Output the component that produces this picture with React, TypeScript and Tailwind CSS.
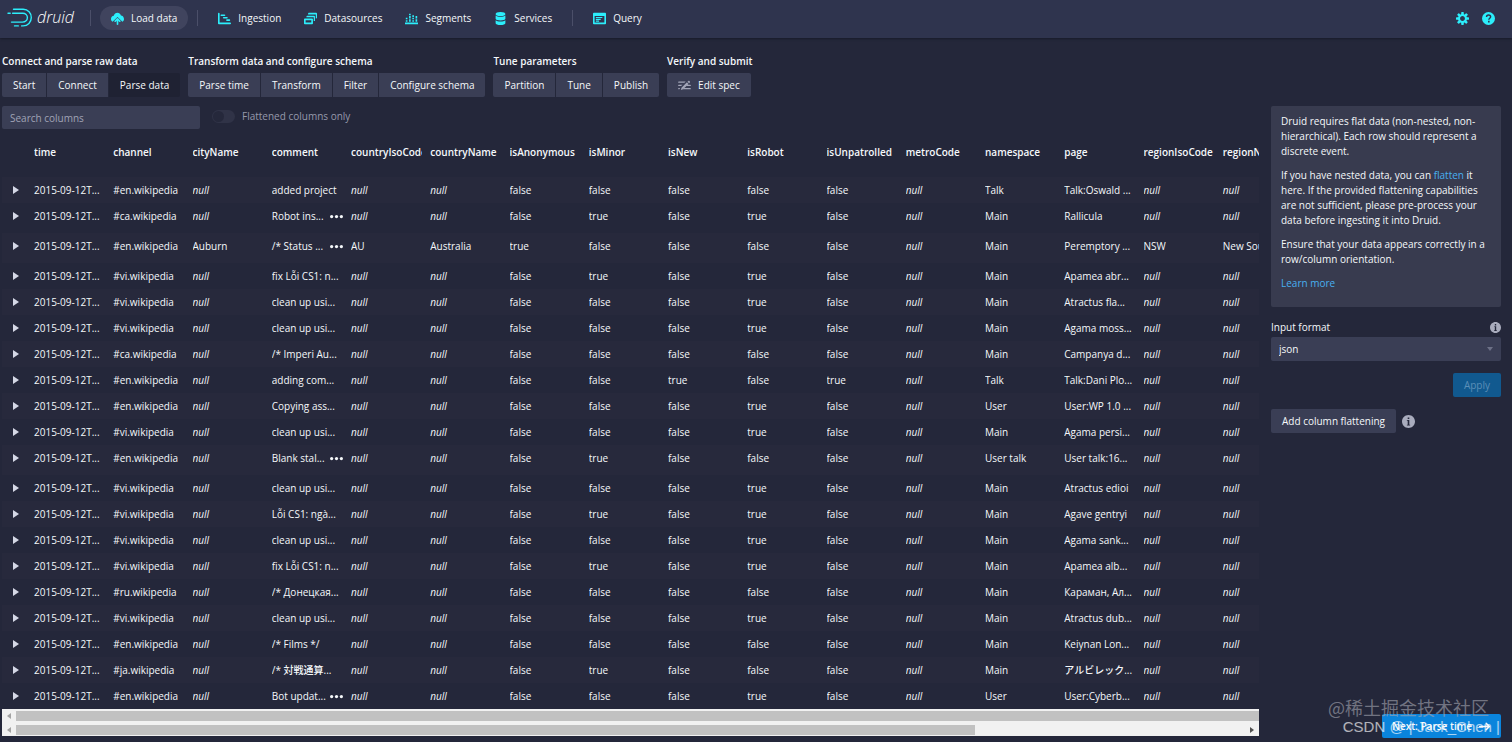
import React from 'react';
import type { ReactNode } from 'react';

interface IconProps {
  className?: string;
}

interface SvgIconProps extends IconProps {
  children: ReactNode;
}

const SvgIcon: React.FC<SvgIconProps> = ({ className = 'size-3', children }) => (
  <svg className={`shrink-0 ${className}`} viewBox="0 0 16 16" fill="currentColor" aria-hidden="true">
    {children}
  </svg>
);

const CloudUploadIcon: React.FC<IconProps> = ({ className }) => (
  <SvgIcon className={className}>
    <path d="M12.200 4.200C11.500 2.200 9.900 1 8 1 5.800 1 4 2.500 3.400 4.600 1.400 4.900 0 6.500 0 8.500c0 1.500.8 2.800 2 3.500L8 6l6 6c1.200-.7 2-1.900 2-3.500 0-2.300-1.700-4.200-3.800-4.300z" />
    <path d="M8.700 7.800a1 1 0 0 0-1.400 0l-3 3a1 1 0 0 0 1.400 1.400L7 10.900V15a1 1 0 0 0 2 0v-4.100l1.300 1.300a1 1 0 0 0 1.400-1.400z" />
  </SvgIcon>
);

const GanttChartIcon: React.FC<IconProps> = ({ className }) => (
  <SvgIcon className={className}>
    <path d="M1 1a1 1 0 0 1 1 1v11h13a1 1 0 1 1 0 2H1a1 1 0 0 1-1-1V2a1 1 0 0 1 1-1z" />
    <path d="M4 3h4a1 1 0 0 1 0 2H4a1 1 0 0 1 0-2zM7 6h4a1 1 0 0 1 0 2H7a1 1 0 0 1 0-2zM11 9h3a1 1 0 0 1 0 2h-3a1 1 0 0 1 0-2z" />
  </SvgIcon>
);

const MultiSelectIcon: React.FC<IconProps> = ({ className }) => (
  <SvgIcon className={className}>
    <path fillRule="evenodd" d="M1 8h9c.6 0 1 .4 1 1v5c0 .6-.4 1-1 1H1c-.6 0-1-.4-1-1V9c0-.6.4-1 1-1zm1 2v3h7v-3H2z" />
    <path d="M4 4.500h8.500c.6 0 1 .4 1 1V11h-1.500V6.500H3V5.500c0-.6.4-1 1-1z" />
    <path d="M6 1h9c.6 0 1 .4 1 1v5c0 .6-.4 1-1 1h-.5V3H5V2c0-.6.4-1 1-1z" />
  </SvgIcon>
);

const StackedChartIcon: React.FC<IconProps> = ({ className }) => (
  <SvgIcon className={className}>
    <path d="M0 13h16v2H0zM1 10h2v2H1zM5 9h2v3H5zM9 10h2v2H9zM13 9h2v3h-2zM1 7h2v2H1zM5 5h2v3H5zM9 7h2v2H9zM13 5h2v3h-2zM5 2h2v2H5zM9 4h2v2H9z" />
  </SvgIcon>
);

const DatabaseIcon: React.FC<IconProps> = ({ className }) => (
  <SvgIcon className={className}>
    <ellipse cx="8" cy="2.500" rx="6" ry="2.500" />
    <path d="M2 4.200c1 1.100 3.400 1.600 6 1.600s5-.5 6-1.600v4.100c0 1.100-2.700 2.100-6 2.100S2 9.400 2 8.300z" />
    <path d="M2 10c1 1.100 3.400 1.700 6 1.700s5-.6 6-1.700v3.800c0 1.200-2.700 2.200-6 2.200s-6-1-6-2.200z" />
  </SvgIcon>
);

const ApplicationIcon: React.FC<IconProps> = ({ className }) => (
  <SvgIcon className={className}>
    <path
      fillRule="evenodd"
      d="M1 1h14c.6 0 1 .4 1 1v12c0 .6-.4 1-1 1H1c-.6 0-1-.4-1-1V2c0-.6.4-1 1-1zm1 4v8h12V5H2z"
    />
    <path d="M3.500 6.200h8v1.300h-8zM3.500 8.400h6v1.300h-6zM3.500 10.600h4v1.300h-4z" />
  </SvgIcon>
);

const CogIcon: React.FC<IconProps> = ({ className }) => (
  <SvgIcon className={className}>
    <path d="M15.19 6.39h-1.850c-.11-.37-.27-.71-.45-1.040l1.360-1.360c.31-.31.31-.82 0-1.130l-1.130-1.130a.803.803 0 0 0-1.130 0l-1.360 1.360c-.33-.17-.67-.33-1.040-.44V.79c0-.44-.36-.8-.8-.8h-1.600c-.44 0-.8.36-.8.8v1.860c-.39.12-.75.28-1.100.47l-1.300-1.300c-.3-.3-.79-.3-1.090 0L1.820 2.910c-.3.3-.3.79 0 1.090l1.300 1.300c-.2.34-.36.7-.48 1.090H.79c-.44 0-.8.36-.8.8v1.600c0 .44.36.8.8.8h1.850c.11.37.27.71.45 1.040l-1.360 1.360c-.31.31-.31.82 0 1.130l1.130 1.130c.31.31.82.31 1.130 0l1.360-1.360c.33.18.67.33 1.040.44v1.860c0 .44.36.8.8.8h1.600c.44 0 .8-.36.8-.8v-1.860c.39-.12.75-.28 1.100-.47l1.300 1.300c.3.3.79.3 1.090 0l1.090-1.090c.3-.3.3-.79 0-1.090l-1.300-1.300c.19-.35.36-.71.48-1.100h1.850c.44 0 .8-.36.8-.8v-1.600a.816.816 0 0 0-.81-.79zm-7.200 4.600c-1.660 0-3-1.340-3-3s1.340-3 3-3 3 1.340 3 3-1.340 3-3 3z" />
  </SvgIcon>
);

const HelpIcon: React.FC<IconProps> = ({ className }) => (
  <SvgIcon className={className}>
    <circle cx="8" cy="8" r="8" />
    <path d="M5.600 6.200c0-1.500 1-2.500 2.500-2.500s2.500.9 2.500 2.200c0 1.700-2.200 1.800-2.200 3.600" fill="none" stroke="#2f344e" strokeWidth="1.800" />
    <path d="M7.400 10.900h2v2h-2z" fill="#2f344e" />
  </SvgIcon>
);

const InfoIcon: React.FC<IconProps> = ({ className }) => (
  <SvgIcon className={className}>
    <path d="M8 0C3.580 0 0 3.580 0 8s3.580 8 8 8 8-3.580 8-8-3.580-8-8-8zM7 3h2v2H7V3zm3 10H6v-1h1V7H6V6h3v6h1v1z" />
  </SvgIcon>
);

const EditSpecIcon: React.FC<IconProps> = ({ className }) => (
  <SvgIcon className={className}>
    <path d="M1 3h8.500l-1.700 1.700H1a.85.85 0 0 1 0-1.700zM1 7h4.500l-1.700 1.700H1A.85.85 0 0 1 1 7zM1 11h1.500l-.6 1.700H1A.85.85 0 0 1 1 11zM11.500 7H15a.85.85 0 0 1 0 1.700H9.800zM7.500 11H15a.85.85 0 0 1 0 1.700H5.800z" />
    <path d="m3.500 13.500.8-2.700 6.700-6.700 1.900 1.900-6.700 6.700zM11.700 3.400l1-1c.4-.4.9-.4 1.300 0l.6.6c.4.4.4.9 0 1.300l-1 1z" />
  </SvgIcon>
);

const ArrowRightIcon: React.FC<IconProps> = ({ className }) => (
  <SvgIcon className={className}>
    <path d="M14.700 7.300l-4-4a1 1 0 0 0-1.400 1.400L11.600 7H2a1 1 0 0 0 0 2h9.600l-2.300 2.300a1 1 0 0 0 1.400 1.400l4-4a1 1 0 0 0 0-1.400z" />
  </SvgIcon>
);

const MoreIcon: React.FC<IconProps> = ({ className }) => (
  <SvgIcon className={className}>
    <circle cx="2" cy="8" r="2" />
    <circle cx="8" cy="8" r="2" />
    <circle cx="14" cy="8" r="2" />
  </SvgIcon>
);

const DruidLogo: React.FC = () => (
  <a href="#home" className="flex w-[75px] items-center gap-1 text-white">
    <svg className="h-5 w-[26px]" viewBox="0 0 26 20" fill="none" stroke="#2ceefb" strokeWidth="1.400" strokeLinecap="round" aria-hidden="true">
      <path d="M6.500 1.300h9.800a8 8 0 0 1 8 8.300c0 4.600-3.500 8.300-8.200 8.300h-1.500" />
      <path d="M1 5.200h2.200" />
      <path d="M5.600 5.200h10.200c2.600 0 4.600 1.900 4.600 4.400s-2 4.500-4.900 4.500H4.500" />
      <path d="M7.500 17.900h3.800" />
    </svg>
    <span className="pb-[3px] text-[16px] leading-5 font-light italic">druid</span>
  </a>
);

interface NavItem {
  label: string;
  Icon: React.FC<IconProps>;
}

const VIEW_ITEMS: NavItem[] = [
  { label: 'Ingestion', Icon: GanttChartIcon },
  { label: 'Datasources', Icon: MultiSelectIcon },
  { label: 'Segments', Icon: StackedChartIcon },
  { label: 'Services', Icon: DatabaseIcon },
];

const NavLink: React.FC<NavItem & { active?: boolean }> = ({ label, Icon, active = false }) => (
  <a
    href={`#${label.toLowerCase().replace(' ', '-')}`}
    className={`flex h-6 items-center gap-[7px] rounded-full px-[11px] ${active ? 'bg-[#40445e]' : ''}`}
  >
    <Icon className="size-[13px] text-[#2ceefb]" />
    {label}
  </a>
);

const NavDivider: React.FC = () => <div className="mx-2 h-4 w-px bg-[#4b4f69]" />;

const HeaderBar: React.FC = () => (
  <header className="flex h-[38px] shrink-0 items-center bg-[#2f344e] pr-[17px] pb-[2px] pl-[7px] shadow-[0_1px_2px_#181b29]">
    <DruidLogo />
    <nav className="flex items-center gap-px">
      <NavDivider />
      <NavLink label="Load data" Icon={CloudUploadIcon} active />
      <NavDivider />
      {VIEW_ITEMS.map((item) => (
        <NavLink key={item.label} {...item} />
      ))}
      <NavDivider />
      <NavLink label="Query" Icon={ApplicationIcon} />
    </nav>
    <div className="ml-auto flex items-center gap-[13px] text-[#2ceefb]">
      <button type="button" aria-label="Settings">
        <CogIcon className="size-[13px]" />
      </button>
      <button type="button" aria-label="Help">
        <HelpIcon className="size-[13px]" />
      </button>
    </div>
  </header>
);

interface StepGroup {
  title: string;
  steps: string[];
}

const STEP_GROUPS: StepGroup[] = [
  { title: 'Connect and parse raw data', steps: ['Start', 'Connect', 'Parse data'] },
  { title: 'Transform data and configure schema', steps: ['Parse time', 'Transform', 'Filter', 'Configure schema'] },
  { title: 'Tune parameters', steps: ['Partition', 'Tune', 'Publish'] },
  { title: 'Verify and submit', steps: ['Edit spec'] },
];

const ACTIVE_STEP = 'Parse data';

const StepNav: React.FC = () => (
  <div className="flex gap-2">
    {STEP_GROUPS.map((group) => (
      <section key={group.title}>
        <h2 className="h-[19px] leading-[15px] font-semibold whitespace-nowrap">{group.title}</h2>
        <div className="flex gap-px">
          {group.steps.map((step) => (
            <button
              key={step}
              type="button"
              className={`flex h-6 items-center gap-[7px] px-[11px] whitespace-nowrap first:rounded-l-xs last:rounded-r-xs ${
                step === ACTIVE_STEP ? 'bg-[#1f2233]' : 'bg-[#3a3e55]'
              }`}
            >
              {step === 'Edit spec' && <EditSpecIcon className="size-[13px] text-[#a3a6b8]" />}
              {step}
            </button>
          ))}
        </div>
      </section>
    ))}
  </div>
);

const COLUMNS = [
  'time',
  'channel',
  'cityName',
  'comment',
  'countryIsoCode',
  'countryName',
  'isAnonymous',
  'isMinor',
  'isNew',
  'isRobot',
  'isUnpatrolled',
  'metroCode',
  'namespace',
  'page',
  'regionIsoCode',
  'regionName',
];

interface Row {
  channel: string;
  comment: string;
  // isAnonymous, isMinor, isNew, isRobot, isUnpatrolled
  flags: string;
  namespace: string;
  page: string;
  more?: boolean;
  city?: string;
  countryCode?: string;
  country?: string;
  regionCode?: string;
  region?: string;
}

const ROWS: Row[] = [
  { channel: 'en', comment: 'added project', flags: 'fffff', namespace: 'Talk', page: 'Talk:Oswald ...' },
  { channel: 'ca', comment: 'Robot ins...', flags: 'ftftf', namespace: 'Main', page: 'Rallicula', more: true },
  {
    channel: 'en',
    comment: '/* Status ...',
    flags: 'tffff',
    namespace: 'Main',
    page: 'Peremptory ...',
    more: true,
    city: 'Auburn',
    countryCode: 'AU',
    country: 'Australia',
    regionCode: 'NSW',
    region: 'New South Wales',
  },
  { channel: 'vi', comment: 'fix Lỗi CS1: n...', flags: 'ftftf', namespace: 'Main', page: 'Apamea abr...' },
  { channel: 'vi', comment: 'clean up usi...', flags: 'ffftf', namespace: 'Main', page: 'Atractus fla...' },
  { channel: 'vi', comment: 'clean up usi...', flags: 'ffftf', namespace: 'Main', page: 'Agama moss...' },
  { channel: 'ca', comment: '/* Imperi Au...', flags: 'fffff', namespace: 'Main', page: 'Campanya d...' },
  { channel: 'en', comment: 'adding com...', flags: 'fftft', namespace: 'Talk', page: 'Talk:Dani Plo...' },
  { channel: 'en', comment: 'Copying ass...', flags: 'ffftf', namespace: 'User', page: 'User:WP 1.0 ...' },
  { channel: 'vi', comment: 'clean up usi...', flags: 'ffftf', namespace: 'Main', page: 'Agama persi...' },
  { channel: 'en', comment: 'Blank stal...', flags: 'ftfff', namespace: 'User talk', page: 'User talk:16...', more: true },
  { channel: 'vi', comment: 'clean up usi...', flags: 'ffftf', namespace: 'Main', page: 'Atractus edioi' },
  { channel: 'vi', comment: 'Lỗi CS1: ngà...', flags: 'ftftf', namespace: 'Main', page: 'Agave gentryi' },
  { channel: 'vi', comment: 'clean up usi...', flags: 'ffftf', namespace: 'Main', page: 'Agama sank...' },
  { channel: 'vi', comment: 'fix Lỗi CS1: n...', flags: 'ftftf', namespace: 'Main', page: 'Apamea alb...' },
  { channel: 'ru', comment: '/* Донецкая...', flags: 'fffff', namespace: 'Main', page: 'Караман, Ал...' },
  { channel: 'vi', comment: 'clean up usi...', flags: 'ffftf', namespace: 'Main', page: 'Atractus dub...' },
  { channel: 'en', comment: '/* Films */', flags: 'fffff', namespace: 'Main', page: 'Keiynan Lon...' },
  { channel: 'ja', comment: '/* 対戦通算...', flags: 'ftfff', namespace: 'Main', page: 'アルビレック...' },
  { channel: 'en', comment: 'Bot updat...', flags: 'ffftf', namespace: 'User', page: 'User:Cyberb...', more: true },
];

const rowValues = (row: Row): (string | undefined)[] => [
  '2015-09-12T...',
  `#${row.channel}.wikipedia`,
  row.city,
  row.comment,
  row.countryCode,
  row.country,
  ...row.flags.split('').map((flag) => (flag === 't' ? 'true' : 'false')),
  undefined,
  row.namespace,
  row.page,
  row.regionCode,
  row.region,
];

const DataTable: React.FC = () => (
  <table className="w-full min-w-[1295px] table-fixed text-left">
    <thead>
      <tr className="h-[42px]">
        <th className="w-[27px]" aria-label="Expand" />
        {COLUMNS.map((column) => (
          <th key={column} className="pr-[3px] pb-[7px] pl-[5px] font-semibold">
            <div className="overflow-hidden whitespace-nowrap">{column}</div>
          </th>
        ))}
      </tr>
    </thead>
    <tbody>
      {ROWS.map((row, index) => (
        <tr key={index} className={`align-top odd:bg-[#27293c] ${row.more ? 'h-[30px]' : 'h-[26px]'}`}>
          <td className="p-0">
            <button type="button" aria-label="Expand row" className="flex h-[26px] w-full items-center justify-center text-[#d5d8e6]">
              <svg className="h-2 w-[6px]" viewBox="0 0 6 8" fill="currentColor" aria-hidden="true">
                <path d="M0 0l6 4-6 4z" />
              </svg>
            </button>
          </td>
          {rowValues(row).map((value, column) => (
            <td key={COLUMNS[column]} className="pr-[3px] pl-[5px] py-0 leading-[26px] whitespace-nowrap">
              {row.more && COLUMNS[column] === 'comment' ? (
                <div className="flex items-center justify-between">
                  <span>{value}</span>
                  <button type="button" aria-label="Show full value">
                    <MoreIcon className="size-[13px]" />
                  </button>
                </div>
              ) : (
                <div className="overflow-hidden">{value ?? <em>null</em>}</div>
              )}
            </td>
          ))}
        </tr>
      ))}
    </tbody>
  </table>
);

const ScrollArrow: React.FC<{ direction: 'left' | 'right'; className: string }> = ({ direction, className }) => (
  <svg className={`mx-[5px] h-[6px] w-1 shrink-0 ${className}`} viewBox="0 0 4 6" fill="currentColor" aria-hidden="true">
    <path d={direction === 'left' ? 'M4 0v6L0 3z' : 'M0 0v6l4-3z'} />
  </svg>
);

const ScrollBars: React.FC = () => (
  <div className="shrink-0 bg-[#f1f1f1]" aria-hidden="true">
    <div className="flex h-[14px] items-center">
      <ScrollArrow direction="left" className="text-[#a3a3a3]" />
      <div className="h-[10px] flex-1 bg-[#c1c1c1]" />
    </div>
    <div className="flex h-[13px] items-center">
      <ScrollArrow direction="left" className="text-[#a3a3a3]" />
      <div className="flex-1">
        <div className="h-[10px] w-[78%] bg-[#c1c1c1]" />
      </div>
      <ScrollArrow direction="right" className="text-[#505050]" />
    </div>
  </div>
);

const ControlPanel: React.FC = () => (
  <aside className="flex w-[230px] shrink-0 flex-col items-stretch pb-1">
    <div className="flex flex-col gap-[9px] rounded-xs bg-[#383b4f] px-[10px] pt-2 pb-4 leading-[15px]">
      <p>Druid requires flat data (non-nested, non-hierarchical). Each row should represent a discrete event.</p>
      <p>
        If you have nested data, you can{' '}
        <a href="#flatten" className="text-[#48aff0]">
          flatten
        </a>{' '}
        it here. If the provided flattening capabilities are not sufficient, please pre-process your data before
        ingesting it into Druid.
      </p>
      <p>Ensure that your data appears correctly in a row/column orientation.</p>
      <a href="#learn-more" className="text-[#48aff0]">
        Learn more
      </a>
    </div>

    <div className="mt-[10px] flex h-5 items-center justify-between">
      <label htmlFor="input-format">Input format</label>
      <button type="button" aria-label="About input format" className="text-[#a9acbd]">
        <InfoIcon className="size-[11px]" />
      </button>
    </div>
    <div className="relative">
      <select
        id="input-format"
        defaultValue="json"
        className="h-6 w-full appearance-none rounded-xs bg-[#3a3e55] px-2 outline-none"
      >
        <option value="json">json</option>
      </select>
      <svg className="pointer-events-none absolute top-[10px] right-2 h-1 w-[6px] text-[#6d7187]" viewBox="0 0 6 4" fill="currentColor" aria-hidden="true">
        <path d="M0 0h6L3 4z" />
      </svg>
    </div>
    <button type="button" disabled className="mt-3 h-6 self-end rounded-xs bg-[#11598f] px-[11px] text-[#5c8fb8]">
      Apply
    </button>
    <div className="mt-3 flex items-center gap-[6px]">
      <button type="button" className="h-6 rounded-xs bg-[#3a3e55] px-[11px]">
        Add column flattening
      </button>
      <button type="button" aria-label="About flattening" className="text-[#a9acbd]">
        <InfoIcon className="size-[13px]" />
      </button>
    </div>
    <button
      type="button"
      className="mt-auto flex h-6 items-center gap-[6px] self-end rounded-xs bg-[#0a84dc] px-[10px] font-semibold whitespace-nowrap"
    >
      Next: Parse time
      <ArrowRightIcon className="size-[13px]" />
    </button>
  </aside>
);

const Watermark: React.FC = () => (
  <div className="pointer-events-none absolute right-3 bottom-[5px] flex flex-col items-end font-normal whitespace-nowrap">
    <span className="pr-[11px] font-['Noto_Sans_CJK_SC',sans-serif] text-[18px] leading-5 text-[#a6a8b3]/60">
      @稀土掘金技术社区
    </span>
    <span className="font-['Liberation_Sans',sans-serif] text-[15px] leading-5 text-white/65">
      CSDN @ | Jack_Chen |
    </span>
  </div>
);

export default function App() {
  return (
    <div className="relative flex h-screen flex-col overflow-hidden bg-[#24273a] font-['Open_Sans','Noto_Sans_CJK_JP',sans-serif] text-[10px] leading-[15px] font-medium text-[#f5f8fa]">
      <HeaderBar />
      <main className="flex min-h-0 flex-1 flex-col pt-4 pr-[11px] pl-[2px]">
        <StepNav />
        <div className="mt-[9px] flex min-h-0 flex-1 gap-3">
          <div className="mb-[6px] flex min-w-0 flex-1 flex-col">
            <div className="flex items-center gap-3">
              <input
                type="text"
                aria-label="Search columns"
                placeholder="Search columns"
                className="h-[23px] w-[198px] rounded-xs bg-[#3a3e55] px-2 outline-none placeholder:text-[#a0a3b5]"
              />
              <label className="flex items-center gap-[7px] pb-[2px] text-[#9699ab]">
                <input type="checkbox" role="switch" disabled className="peer sr-only" />
                <span className="flex h-[13px] w-[23px] rounded-full bg-[#303347]">
                  <span className="m-px size-[11px] rounded-full bg-[#25283b]" />
                </span>
                Flattened columns only
              </label>
            </div>
            <div className="mt-[6px] min-h-0 flex-1 overflow-hidden">
              <DataTable />
            </div>
            <ScrollBars />
          </div>
          <ControlPanel />
        </div>
      </main>
      <Watermark />
    </div>
  );
}
